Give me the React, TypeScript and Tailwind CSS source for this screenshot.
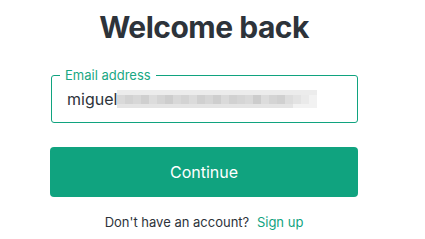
const blurShades = [
  "#d9d9d9", "#d2d2d2", "#d7d7d7", "#cfcfcf", "#dcdcdc", "#d4d4d4", "#cdcdcd", "#d8d8d8",
  "#d3d3d3", "#dbdbdb", "#d0d0d0", "#d6d6d6", "#cecece", "#dadada", "#d1d1d1", "#d5d5d5",
  "#d9d9d9", "#cccccc", "#dcdcdc", "#d4d4d4", "#d0d0d0", "#dddddd", "#e3e3e3", "#eaeaea",
  "#f2f2f2",
];

function BlurredText() {
  return (
    <div className="flex h-[18px] w-[200px]">
      {blurShades.map((c, i) => (
        <div key={i} className="flex h-full w-[8px] flex-col">
          <div className="h-[5px] bg-[#ececec]" />
          <div className="flex-1" style={{ backgroundColor: c }} />
          <div className="h-[4px]" style={{ backgroundColor: i > 21 ? "#f2f2f2" : "#e4e4e4" }} />
        </div>
      ))}
    </div>
  );
}

export default function App() {
  return (
    <div className="h-[239px] w-[425px] bg-white font-['Inter',sans-serif] text-[#2d333a]">
      <div className="flex w-[358px] flex-col pl-[50px] pt-[9px]">
        <h1 className="text-center text-[30px] font-bold leading-[36px] tracking-[-0.5px]">Welcome back</h1>

        <div className="relative mt-[30px] ml-px flex h-[48px] items-center rounded-[3px] border border-[#10a37f] pl-[15px]">
          <span className="absolute -top-[9px] left-[8px] bg-white px-[5px] text-[13px] leading-[16px] text-[#19a883]">
            Email address
          </span>
          <span className="text-[16px] text-[#2d333a]">miguel</span>
          <BlurredText />
        </div>

        <button
          type="button"
          className="mt-[24px] h-[50px] w-full rounded-[4px] bg-[#10a37f] text-[16px] text-white"
        >
          Continue
        </button>

        <p className="mt-[15px] text-center text-[13px] leading-[20px]">
          Don't have an account? <span className="ml-1 text-[#10a37f]">Sign up</span>
        </p>
      </div>
    </div>
  );
}
